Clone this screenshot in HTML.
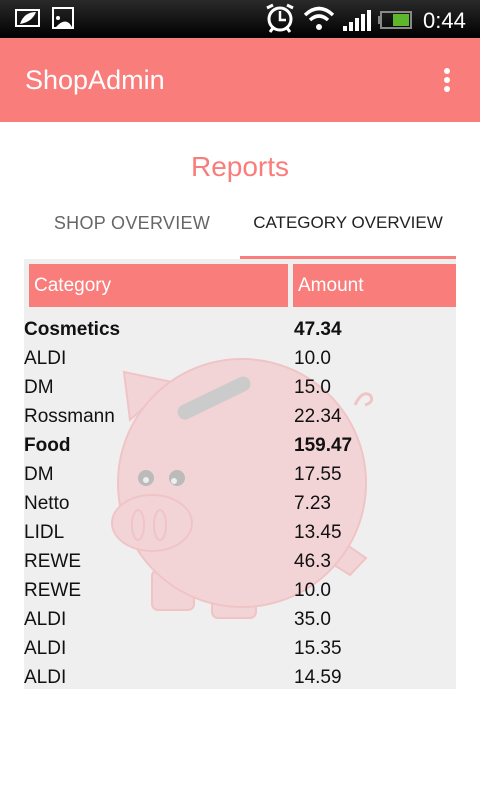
<!DOCTYPE html>
<html><head><meta charset="utf-8"><style>
*{margin:0;padding:0;box-sizing:border-box}
body{width:480px;height:800px;background:#fff;font-family:"Liberation Sans",sans-serif;position:relative;overflow:hidden}
.sb{position:absolute;left:0;top:0;width:480px;height:38px;background:linear-gradient(#2a2a2a,#000)}
.ab{position:absolute;left:0;top:38px;width:480px;height:84px;background:#f87d7b}
.t{position:absolute;color:#fff;font-size:27px;left:25px;top:27px}
.a{position:absolute}
.row{position:absolute;left:24px;font-size:19px;color:#111;height:29px;line-height:29px;width:420px}
.row span{position:absolute;left:270px}
.b{font-weight:bold}
</style></head><body>
<div class="sb">
<svg width="480" height="38" style="position:absolute;left:0;top:0">
<rect x="16" y="10" width="23" height="16" fill="none" stroke="#fff" stroke-width="2"/><path d="M20 24 Q24 12 36 12 Q32 22 20 24Z" fill="#fff"/>
<rect x="53" y="8" width="20" height="20" fill="none" stroke="#fff" stroke-width="2"/><circle cx="58" cy="18" r="2" fill="#fff"/><path d="M56 27 Q66 16 72 27Z" fill="#fff"/>
<circle cx="280" cy="19" r="11" fill="none" stroke="#fff" stroke-width="3"/><path d="M280 11v9h6" stroke="#fff" stroke-width="2.5" fill="none"/><path d="M267 8l6-3M293 8l-6-3M270 32l3-4M290 32l-3-4" stroke="#fff" stroke-width="3"/>
<path d="M305 15 Q319 2 333 15" stroke="#fff" stroke-width="3.5" fill="none"/><path d="M310 20 Q319 12 328 20" stroke="#fff" stroke-width="3.5" fill="none"/><circle cx="319" cy="27" r="3" fill="#fff"/>
<rect x="343" y="26" width="4" height="5" fill="#fff"/><rect x="349" y="22" width="4" height="9" fill="#fff"/><rect x="355" y="18" width="4" height="13" fill="#fff"/><rect x="361" y="14" width="4" height="17" fill="#fff"/><rect x="367" y="10" width="4" height="21" fill="#fff"/>
<rect x="381" y="12" width="30" height="16" fill="none" stroke="#888" stroke-width="2"/><rect x="378" y="16" width="3" height="8" fill="#888"/><rect x="393" y="14" width="16" height="12" fill="#5cb82a"/>
<text x="423" y="28" fill="#fff" font-size="22" font-family="Liberation Sans">0:44</text>
</svg></div>
<div class="ab"><div class="t">ShopAdmin</div>
<div style="position:absolute;left:444px;top:30px;width:6px;height:6px;border-radius:3px;background:#fff"></div>
<div style="position:absolute;left:444px;top:39px;width:6px;height:6px;border-radius:3px;background:#fff"></div>
<div style="position:absolute;left:444px;top:48px;width:6px;height:6px;border-radius:3px;background:#fff"></div></div>
<div class="a" style="left:0;width:480px;top:151px;text-align:center;color:#f87d7b;font-size:28px">Reports</div>
<div class="a" style="left:0;width:264px;top:213px;text-align:center;color:#666;font-size:18px;letter-spacing:0.3px">SHOP OVERVIEW</div>
<div class="a" style="left:240px;width:216px;top:213px;text-align:center;color:#222;font-size:17px">CATEGORY OVERVIEW</div>
<div class="a" style="left:240px;top:256px;width:216px;height:3px;background:#f87d7b"></div>
<div class="a" style="left:24px;top:259px;width:432px;height:430px;background:#efefef"></div>
<svg class="a" style="left:0;top:0" width="480" height="800">
<g stroke="#f0c4c6" stroke-width="2" fill="#f3d4d6">
<path d="M124 372 L172 382 L130 420Z"/>
<rect x="152" y="570" width="42" height="40" rx="6"/><rect x="212" y="580" width="44" height="38" rx="6"/>
<path d="M325 530 L366 558 L350 575 L318 555Z"/>
<circle cx="242" cy="483" r="124"/>
<ellipse cx="152" cy="523" rx="40" ry="28"/>
<ellipse cx="138" cy="525" rx="6" ry="15" fill="none"/><ellipse cx="160" cy="525" rx="6" ry="15" fill="none"/>
<path d="M355 405 Q362 390 370 395 Q375 402 365 405" fill="none" stroke-width="3"/>
</g>
<path d="M185 412 L243 384" stroke="#cbcbcb" stroke-width="15" stroke-linecap="round"/>
<circle cx="146" cy="478" r="8" fill="#bbb"/><circle cx="177" cy="478" r="8" fill="#bbb"/>
<circle cx="146" cy="480" r="3" fill="#eee"/><circle cx="174" cy="481" r="3" fill="#eee"/>
</svg>
<div class="a" style="left:29px;top:264px;width:259px;height:43px;background:#f87d7b;color:#fff;font-size:19px;line-height:43px;padding-left:5px">Category</div>
<div class="a" style="left:293px;top:264px;width:163px;height:43px;background:#f87d7b;color:#fff;font-size:19px;line-height:43px;padding-left:5px">Amount</div>
<div class="row b" style="top:315px">Cosmetics<span>47.34</span></div>
<div class="row" style="top:344px">ALDI<span>10.0</span></div>
<div class="row" style="top:373px">DM<span>15.0</span></div>
<div class="row" style="top:402px">Rossmann<span>22.34</span></div>
<div class="row b" style="top:431px">Food<span>159.47</span></div>
<div class="row" style="top:460px">DM<span>17.55</span></div>
<div class="row" style="top:489px">Netto<span>7.23</span></div>
<div class="row" style="top:518px">LIDL<span>13.45</span></div>
<div class="row" style="top:547px">REWE<span>46.3</span></div>
<div class="row" style="top:576px">REWE<span>10.0</span></div>
<div class="row" style="top:605px">ALDI<span>35.0</span></div>
<div class="row" style="top:634px">ALDI<span>15.35</span></div>
<div class="row" style="top:663px">ALDI<span>14.59</span></div>
</body></html>
